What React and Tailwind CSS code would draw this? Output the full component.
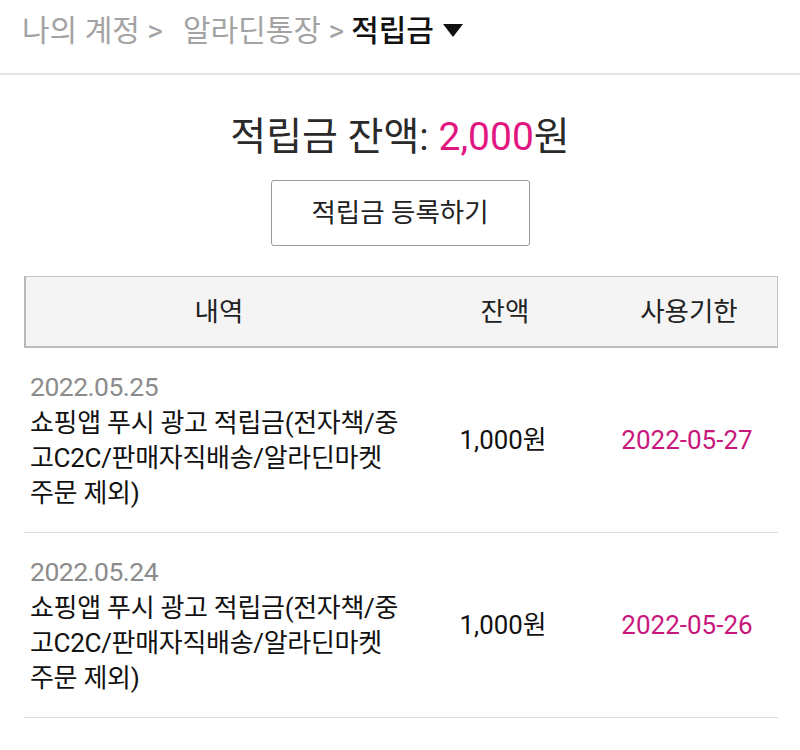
import React from "react";

const FONT = { fontFamily: 'Roboto, "Noto Sans CJK KR", sans-serif' };

function Row({ date, deadline }) {
  return (
    <div className="grid grid-cols-[386px_186px_182px] border-b border-[#dddddd]">
      <div className="pl-[6px] pt-[22px] pb-[21px]">
        <div className="text-[26.5px] leading-[34px] text-[#8c8c8c] tracking-[-0.5px]">{date}</div>
        <div className="mt-[2px] text-[26px] leading-[35px] text-[#111111] tracking-[-0.3px] whitespace-nowrap">
          쇼핑앱 푸시 광고 적립금(전자책/중
          <br />
          고C2C/판매자직배송/알라딘마켓
          <br />
          주문 제외)
        </div>
      </div>
      <div className="flex items-center justify-center text-[25.8px] text-[#111111]">1,000원</div>
      <div className="flex items-center justify-center text-[26px] text-[#c8177c]">{deadline}</div>
    </div>
  );
}

export default function App() {
  return (
    <div className="w-[800px] h-[750px] bg-white overflow-hidden" style={FONT}>
      <div className="h-[75px] border-b-2 border-[#e4e4e4] pl-[22px] pt-[13px]">
        <div className="flex items-center text-[30px] leading-[36px]">
          <span className="text-[#a3a3a3]">나의 계정 &gt;</span>
          <span className="ml-[20px] text-[#a3a3a3]">알라딘통장 &gt;</span>
          <span className="ml-[7px] text-[#111111] font-medium">적립금</span>
          <svg className="ml-[9px]" width="20" height="14" viewBox="0 0 20 14">
            <polygon points="0,0 20,0 10,13" fill="#111111" />
          </svg>
        </div>
      </div>

      <div className="mt-[40px] text-center text-[39px] leading-[44px] text-[#2a2a2a]">
        적립금 잔액: <span className="text-[#e2167f]">2,000</span>원
      </div>

      <div className="mt-[21px] flex justify-center">
        <div className="w-[259px] h-[66px] border border-[#9a9a9a] rounded-[3px] flex items-center justify-center text-[26.5px] text-[#222222]">
          적립금 등록하기
        </div>
      </div>

      <div className="mx-[24px] mt-[30px] w-[754px]">
        <div className="grid grid-cols-[386px_186px_182px] h-[72px] bg-[#f4f4f4] border border-[#c4c4c4] border-l-2 border-b-2 border-l-[#b8b8b8] border-b-[#bcbcbc] text-[26.5px] text-[#222222]">
          <div className="flex items-center justify-center">내역</div>
          <div className="flex items-center justify-center">잔액</div>
          <div className="flex items-center justify-center">사용기한</div>
        </div>
        <Row date="2022.05.25" deadline="2022-05-27" />
        <Row date="2022.05.24" deadline="2022-05-26" />
      </div>
    </div>
  );
}
